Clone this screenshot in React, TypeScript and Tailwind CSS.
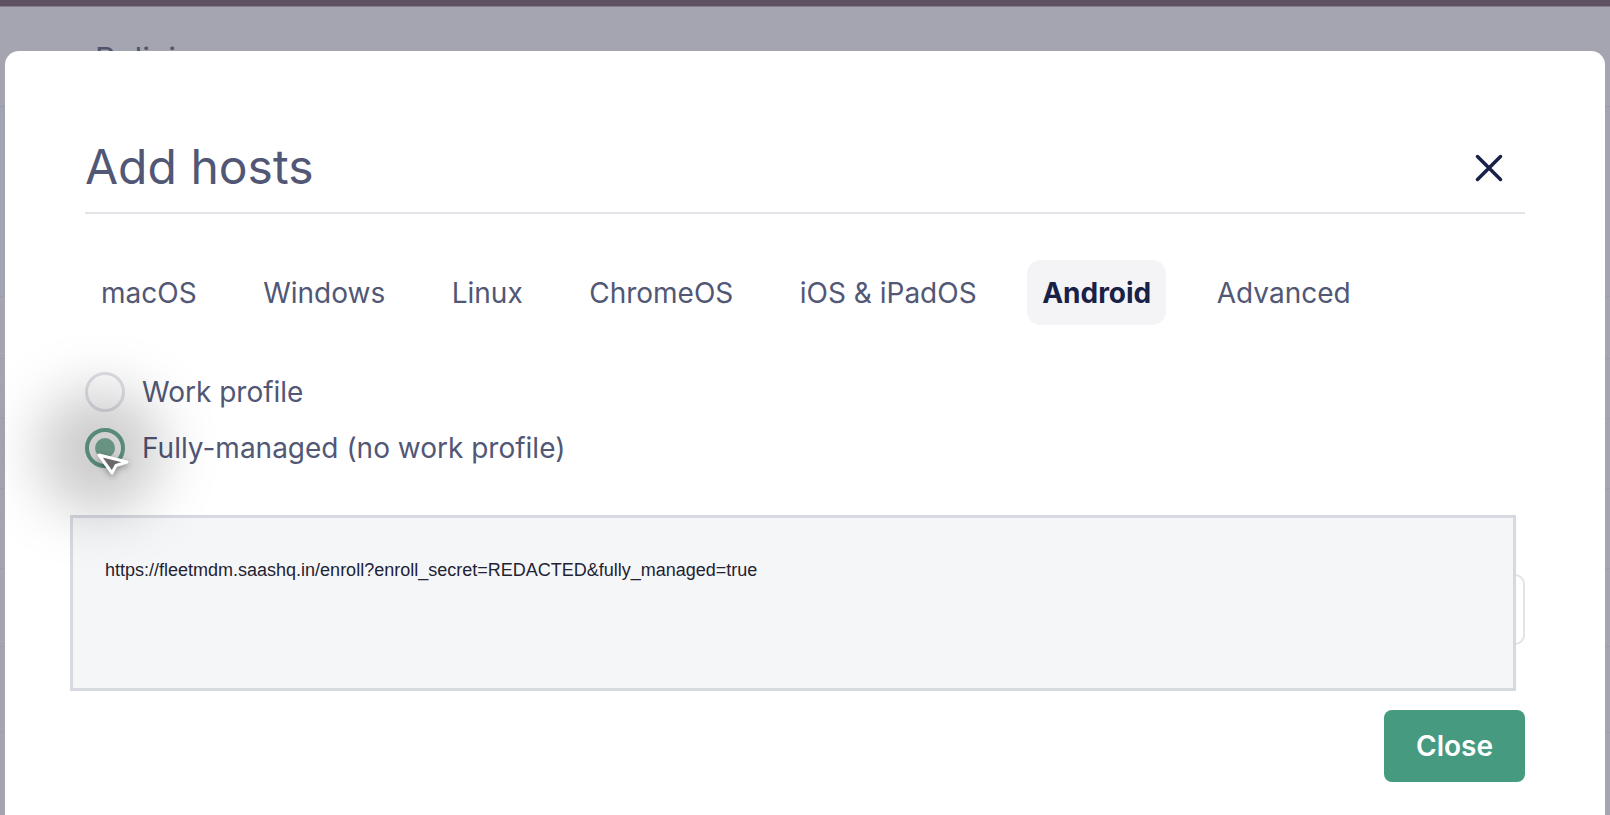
import React from 'react';

const tabs = ['macOS', 'Windows', 'Linux', 'ChromeOS', 'iOS & iPadOS', 'Android', 'Advanced'];

const enrollUrl =
  'https://fleetmdm.saashq.in/enroll?enroll_secret=REDACTED&fully_managed=true';

const CloseIcon = () => (
  <svg width="28" height="28" viewBox="0 0 28 28" fill="none">
    <path d="M2.5 2.5L25.5 25.5M25.5 2.5L2.5 25.5" stroke="#192147" strokeWidth="3.5" strokeLinecap="round" />
  </svg>
);

const Cursor = () => (
  <svg width="40" height="30" viewBox="0 0 40 30" fill="none">
    <path
      d="M4 5L32 12L21 15.5L17 23Z"
      fill="#6a6967"
      stroke="#ffffff"
      strokeWidth="3"
      strokeLinejoin="round"
    />
  </svg>
);

const App = () => {
  return (
    <div className="relative w-full h-[815px] overflow-hidden bg-[#a4a5b1] font-['Inter',sans-serif]">
      {/* page behind the overlay */}
      <div className="h-[6px] bg-[#5e5161]"></div>
      <div className="h-px bg-[#877c88]"></div>
      <div className="h-[100px] border-b border-[#9799a7] pl-[95px] pt-[37px]">
        <h1 className="text-[32px] leading-none text-[#50546b]">Policies</h1>
      </div>
      <div className="h-[190px] border-b border-[#9c9eab] bg-[#a2a4b2]"></div>
      <div className="h-[62px] border-b border-[#9c9eab]"></div>
      <div className="h-[60px] border-b border-[#9c9eab]"></div>
      <div className="h-[70px] border-b border-[#9c9eab]"></div>
      <div className="h-[80px] border-b border-[#9c9eab]"></div>
      <div className="h-[78px] border-b border-[#9c9eab]"></div>
      <div className="h-[86px] border-b border-[#9c9eab]"></div>

      {/* modal */}
      <div className="absolute left-[5px] top-[51px] w-[1600px] h-[800px] bg-white rounded-[14px] px-[80px] pt-[86px]">
        <div className="flex items-center justify-between h-[60px]">
          <h2 className="text-[48px] leading-[60px] font-normal text-[#515774]">Add hosts</h2>
          <button className="mr-[22px] mt-[2px]">
            <CloseIcon />
          </button>
        </div>
        <div className="mt-[15px] h-[2px] bg-[#e2e4ea]"></div>

        <div className="mt-[46px] flex items-center gap-[34.5px]">
          {tabs.map((t) => (
            <div
              key={t}
              className={`h-[65px] flex items-center rounded-[14px] text-[28px] ${
                t === 'Android'
                  ? 'px-[15px] bg-[#f4f4f6] font-bold text-[#192147]'
                  : 'px-4 text-[#515774]'
              }`}
            >
              {t}
            </div>
          ))}
        </div>

        <div className="mt-[47px] flex flex-col gap-[16px] text-[28px] text-[#515774]">
          <label className="flex items-center gap-[17px] h-[40px]">
            <span className="w-[40px] h-[40px] rounded-full border-[3px] border-[#dfe1e7]"></span>
            Work profile
          </label>
          <label className="flex items-center gap-[17px] h-[40px]">
            <span className="w-[40px] h-[40px] rounded-full border-[4px] border-[#6ba891] flex items-center justify-center">
              <span className="w-[20px] h-[20px] rounded-full bg-[#80b5a1]"></span>
            </span>
            Fully-managed (no work profile)
          </label>
        </div>

        <div className="relative mt-[47px] h-[176px] pt-[59px]">
          <div className="h-[71px] rounded-[10px] border-2 border-[#e2e4ea]"></div>
          <div className="absolute -left-[15px] top-0 w-[1446px] h-[176px] bg-[#f5f6f8] border-[3px] border-[#d6dae0] pl-[32px] pt-[40px]">
            <p className="font-['Liberation_Sans',Arial,sans-serif] text-[18px] leading-[24px] text-[#1f2333]">
              {enrollUrl}
            </p>
          </div>
        </div>

        <div className="mt-[19px] flex justify-end">
          <button className="w-[141px] h-[72px] rounded-[8px] bg-[#459a80] text-white text-[28px] font-semibold">
            Close
          </button>
        </div>

        {/* cursor and its shadow */}
        <div className="absolute left-[32px] top-[338px] w-[125px] h-[125px] rounded-full bg-[#000000]/20 blur-[28px] pointer-events-none"></div>
        <div className="absolute left-[90px] top-[399px] pointer-events-none drop-shadow-[0_2px_3px_rgba(0,0,0,0.35)]">
          <Cursor />
        </div>
      </div>
    </div>
  );
};

export default App;
